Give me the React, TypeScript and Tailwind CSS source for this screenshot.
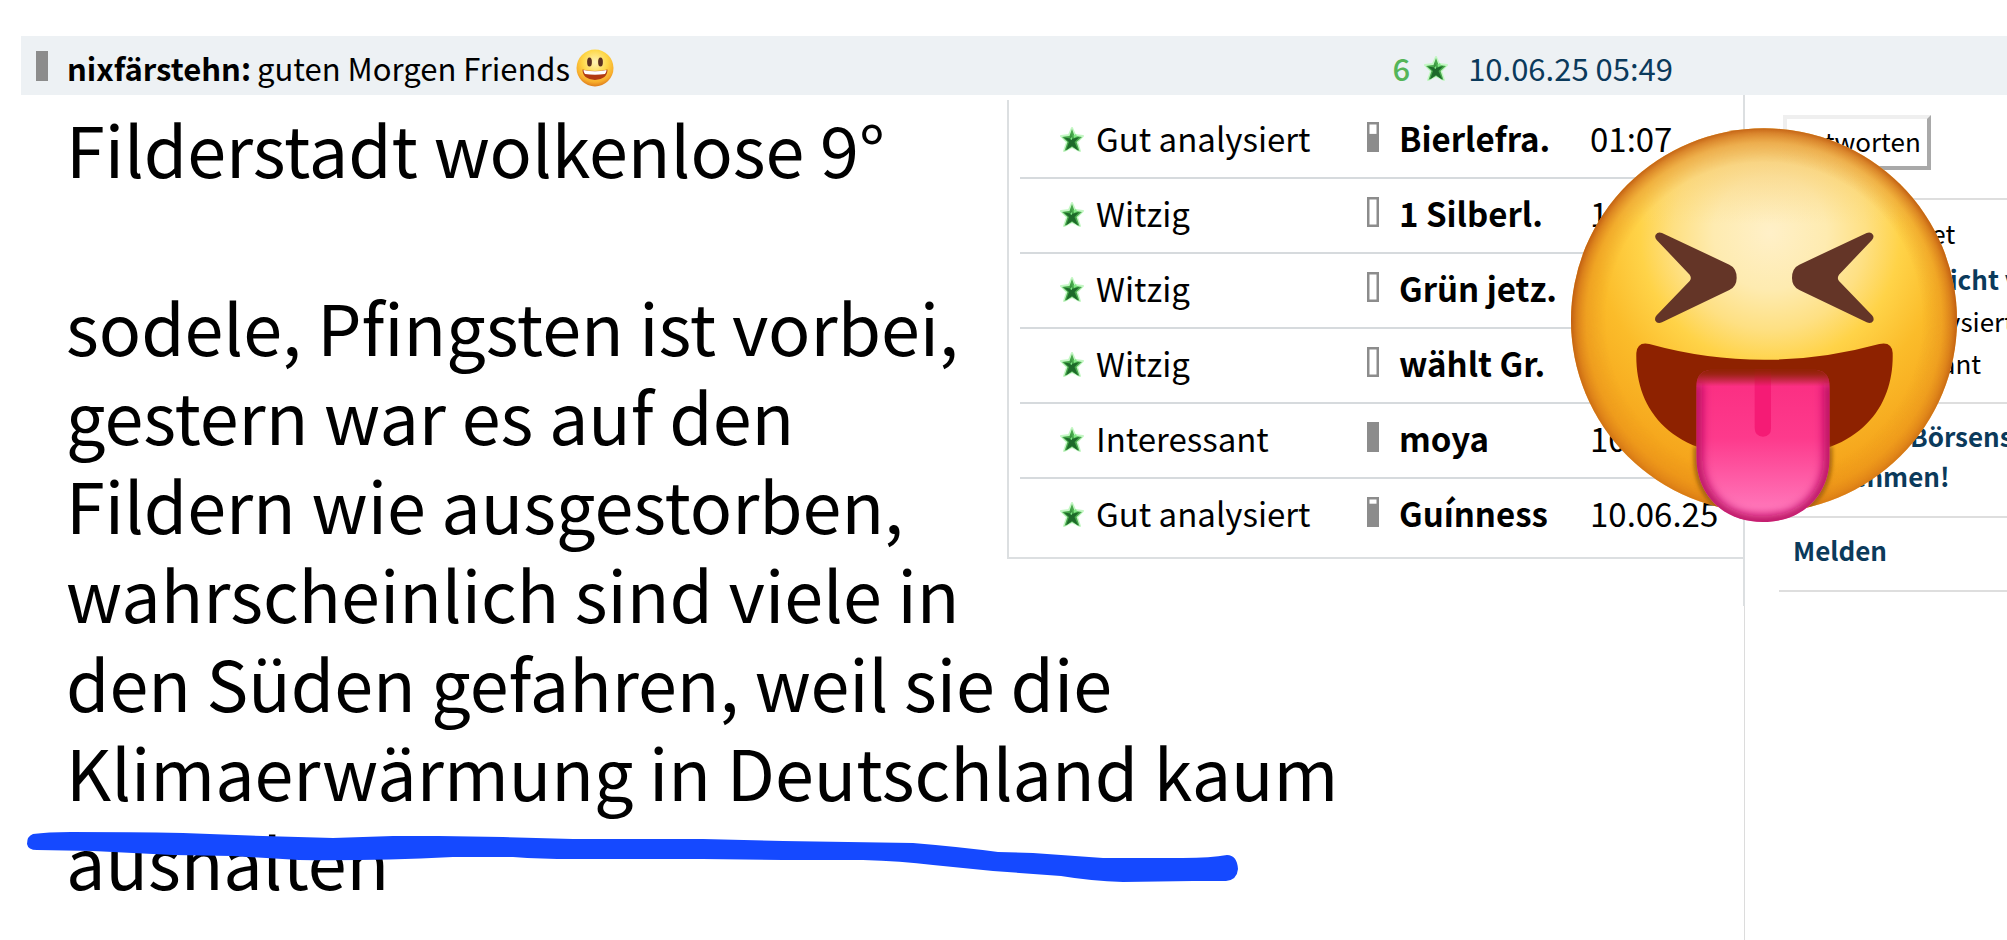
type Rating = {
  label: string;
  level: number;
  user: string;
  time: string;
};

const RATINGS: Rating[] = [
  { label: "Gut analysiert", level: 60, user: "Bierlefra.", time: "01:07" },
  { label: "Witzig",         level: 0,  user: "1 Silberl.", time: "10.06.25" },
  { label: "Witzig",         level: 0,  user: "Grün jetz.", time: "10.06.25" },
  { label: "Witzig",         level: 0,  user: "wählt Gr.",  time: "10.06.25" },
  { label: "Interessant",    level: 100, user: "moya",      time: "10.06.25" },
  { label: "Gut analysiert", level: 80, user: "Guínness",   time: "10.06.25" },
];

const POST_LINES = [
  "Filderstadt wolkenlose 9°",
  "",
  "sodele, Pfingsten ist vorbei,",
  "gestern war es auf den",
  "Fildern wie ausgestorben,",
  "wahrscheinlich sind viele in",
  "den Süden gefahren, weil sie die",
  "Klimaerwärmung in Deutschland kaum",
  "aushalten",
];

/* activity meter: grey column filled from the bottom */
function LevelBar({ level }: { level: number }) {
  const gap = 26 * (1 - level / 100);
  return (
    <svg viewBox="0 0 12 30" className="h-[30px] w-3 shrink-0" aria-hidden="true">
      <rect width="12" height="30" fill="#8c8c8c" />
      {gap > 0 && <rect x="2.500" y="2.500" width="7" height={gap - 1} fill="#fff" />}
    </svg>
  );
}

function Star() {
  return (
    <svg viewBox="0 0 24 26" className="h-[26px] w-6 shrink-0" aria-hidden="true">
      <path d="M12 2l3 7 8 1-6 6 3 9-8-4-8 4 3-9-6-6 8-1z" fill="#a6efa6" stroke="#c4f7c4" strokeWidth="2" strokeLinejoin="round" />
      <path d="M12 3l2.500 7 7.500 1-5.500 5 3 9-7.500-4-7.500 4 3-9-5.500-5 7.500-1z" fill="#48a94c" />
      <path d="M11 7l.5 6 8-2-5 5 4 9-6.500-5-6 4.500 3-8.500-5-4.500 6.500 1z" fill="#1d6a2a" />
      <path d="M13.500 9.500l2.500-1.500 1 2.500-3 1.500zM10 13l2-2v3z" fill="#7fe884" />
    </svg>
  );
}

/* small smiley behind the thread title */
function Smiley() {
  return (
    <svg viewBox="0 0 38 38" className="size-[38px] shrink-0 self-center" aria-hidden="true">
      <defs>
        <radialGradient id="smiley" cx="50%" cy="34%" r="66%">
          <stop offset="0" stopColor="#fff3b8" />
          <stop offset="0.5" stopColor="#fed848" />
          <stop offset="0.82" stopColor="#f8ae2c" />
          <stop offset="1" stopColor="#dd7b1c" />
        </radialGradient>
      </defs>
      <circle cx="19" cy="19" r="18.500" fill="url(#smiley)" />
      <ellipse cx="13.500" cy="13" rx="2.400" ry="4.500" fill="#5b3020" />
      <ellipse cx="24.500" cy="13" rx="2.400" ry="4.500" fill="#5b3020" />
      <path d="M6.500 20.500q12.500 3 25 0q0 9.500-12.500 10.500q-12.500-1-12.500-10.500z" fill="#b23a10" />
      <path d="M7.500 21q11.500 2.500 23 0q0 2.500-1.500 4q-10 1.500-20 0q-1.500-1.500-1.500-4z" fill="#fff" />
    </svg>
  );
}

function TongueFace() {
  return (
    <svg viewBox="93 85 1161 1182" className="h-[394px] w-[387px]" aria-hidden="true">
      <defs>
        <radialGradient id="face" gradientUnits="userSpaceOnUse" cx="690" cy="400" r="850">
          <stop offset="0" stopColor="#fff0c8" />
          <stop offset="0.2" stopColor="#feebb0" />
          <stop offset="0.34" stopColor="#fee083" />
          <stop offset="0.46" stopColor="#ffd348" />
          <stop offset="0.62" stopColor="#fbbc2a" />
          <stop offset="0.85" stopColor="#f5a51c" />
          <stop offset="1" stopColor="#ee9214" />
        </radialGradient>
        <linearGradient id="brow" x1="0" y1="0" x2="0" y2="1">
          <stop offset="0" stopColor="#f0bb62" stopOpacity="0.8" />
          <stop offset="0.25" stopColor="#f8d27a" stopOpacity="0" />
        </linearGradient>
        <radialGradient id="rim" gradientUnits="userSpaceOnUse" cx="672" cy="662" r="579">
          <stop offset="0.82" stopColor="#e08a1c" stopOpacity="0" />
          <stop offset="0.92" stopColor="#e0851c" stopOpacity="0.4" />
          <stop offset="0.97" stopColor="#d06f18" stopOpacity="0.75" />
          <stop offset="1" stopColor="#c05e12" />
        </radialGradient>
        <linearGradient id="rimFade" x1="0" y1="0" x2="0" y2="1">
          <stop offset="0.5" stopColor="#fff" />
          <stop offset="1" stopColor="#777" />
        </linearGradient>
        <mask id="rimMask">
          <rect x="93" y="85" width="1161" height="1160" fill="url(#rimFade)" />
        </mask>
        <linearGradient id="tongue" x1="0" y1="0" x2="0" y2="1">
          <stop offset="0" stopColor="#d02560" />
          <stop offset="0.1" stopColor="#fb2f83" />
          <stop offset="0.45" stopColor="#fd3a8c" />
          <stop offset="0.9" stopColor="#ff74b8" />
          <stop offset="1" stopColor="#f860a8" />
        </linearGradient>
        <linearGradient id="tongueShade" x1="0" y1="0" x2="0" y2="1">
          <stop offset="0" stopColor="#8e2200" />
          <stop offset="0.3" stopColor="#8e2200" stopOpacity="0.8" />
          <stop offset="1" stopColor="#8e2200" stopOpacity="0" />
        </linearGradient>
        <clipPath id="tongueClip">
          <path d="M469 860q0-45 42-50H827q42 5 42 50V1070C869 1195 780 1267 669 1267S469 1195 469 1070z" />
        </clipPath>
        <filter id="soft" x="-20%" y="-20%" width="140%" height="140%">
          <feGaussianBlur stdDeviation="14" />
        </filter>
        <filter id="softer" x="-20%" y="-20%" width="140%" height="140%">
          <feGaussianBlur stdDeviation="6" />
        </filter>
        <clipPath id="faceClip">
          <ellipse cx="672" cy="662" rx="579" ry="576" />
        </clipPath>
      </defs>
      <ellipse cx="672" cy="662" rx="579" ry="576" fill="url(#face)" />
      <ellipse cx="672" cy="662" rx="579" ry="576" fill="url(#brow)" />
      <ellipse cx="672" cy="662" rx="579" ry="576" fill="url(#rim)" mask="url(#rimMask)" />
      {/* eyes */}
      <path
        id="eye"
        d="M366 400L568 495Q590 505 590 535Q590 561 568 571L366 668Q352 674 346 663Q343 654 350 647L449 544Q456 535 449 525L350 421Q343 413 347 405Q354 395 366 400z"
        fill="#643527"
      />
      <use href="#eye" transform="translate(1346 0) scale(-1 1)" />
      {/* mouth */}
      <path
        d="M328 733Q672 828 1018 733Q1056 725 1058 760C1062 925 960 1072 672 1076C384 1072 285 925 289 760Q292 725 328 733z"
        fill="#8e2200"
      />
      <g clipPath="url(#faceClip)">
        <path d="M469 1040V1075C469 1195 560 1272 669 1272S869 1195 869 1075V1040" fill="none" stroke="#9a5a10" strokeWidth="14" filter="url(#softer)" />
      </g>
      <g clipPath="url(#tongueClip)">
        <rect x="465" y="808" width="410" height="460" fill="url(#tongue)" />
        <path d="M644 808H693V985Q693 1011 669 1011T644 985z" fill="#f51b75" />
        <path d="M469 850V1070C469 1195 560 1267 669 1267S869 1195 869 1070V850" fill="none" stroke="#b80d62" strokeWidth="36" filter="url(#soft)" />
        <rect x="465" y="808" width="410" height="52" fill="url(#tongueShade)" />
      </g>
    </svg>
  );
}

function MarkerStroke() {
  return (
    <svg viewBox="0 0 1220 62" className="h-[62px] w-[1220px]" aria-hidden="true">
      <path
        d="M6 22Q6 14 12 12Q26 10 50 10Q110 10 162 11L242 14L312 16L372 14L418 14L482 15L552 17L682 17L762 19L892 21Q940 25 977 30L1012 31L1082 36L1162 36Q1190 36 1206 33Q1216 33 1217 47Q1216 58 1205 59L1172 59L1102 60Q1070 59 1040 54L972 49L912 43Q880 39 842 38L762 38L682 37L552 37Q520 37 492 35L432 35Q350 39 278 38L212 34L152 33L72 29L16 28Q7 28 6 22z"
        fill="#1549ff"
      />
    </svg>
  );
}

export default function App() {
  return (
    <div className="flex min-h-screen flex-col overflow-hidden bg-white pt-9 pl-[21px] font-['Noto_Sans_CJK_SC','Open_Sans',sans-serif] text-black">
      {/* Post header */}
      <header className="flex h-[59px] items-baseline bg-[#edf1f4] pt-1 pr-[334px] pl-[15px] text-[31px] leading-[56px]">
        <LevelBar level={100} />
        <h1 className="ml-[19px] flex flex-1 items-baseline gap-1.5">
          <b>nixfärstehn:</b>
          <span>guten Morgen Friends</span>
          <Smiley />
        </h1>
        <span className="mr-3.5 font-medium text-[#55b559]">6</span>
        <Star />
        <a href="#post" className="ml-5 text-[#0b3a5b]">10.06.25 05:49</a>
      </header>

      <div className="relative flex flex-1">
        {/* Post body */}
        <main className="relative flex-1 pt-2 pl-[45px]">
          <div className="float-right -mt-[3px] w-[736px] border-b-2 border-l-2 border-[#dcdfe1] pt-1 pb-[5px] pl-[11px]">
            <table className="w-full text-[33px] leading-[69px]">
              <tbody>
                {RATINGS.map((r, i) => (
                  <tr key={i} className="border-b-2 border-[#d6dadd] last:border-b-0">
                    <td className="w-[347px] pb-1 pl-10">
                      <span className="flex items-baseline gap-3">
                        <Star />
                        {r.label}
                      </span>
                    </td>
                    <td className="w-[223px] pb-1">
                      <span className="flex items-baseline gap-5 font-bold">
                        <LevelBar level={r.level} />
                        {r.user}
                      </span>
                    </td>
                    <td className="pb-1">{r.time}</td>
                  </tr>
                ))}
              </tbody>
            </table>
          </div>
          <p className="text-[70px] leading-[89px] whitespace-nowrap">
            {POST_LINES.map((line, i) => (
              <span key={i}>
                {line}
                <br />
              </span>
            ))}
          </p>
          <div className="absolute top-[727px] left-0">
            <MarkerStroke />
          </div>
        </main>

        {/* Action column */}
        <div className="flex w-[264px] flex-col">
          <aside className="border-l-2 border-[#dcdfe1] pt-5 pb-3.5 pl-[34px] text-[26px] whitespace-nowrap">
            <button className="ml-1 h-[55px] border-4 border-t-[#efefef] border-r-[#a9a9a9] border-b-[#a9a9a9] border-l-[#efefef] bg-white px-1.5 pb-1">
              Antworten
            </button>
            <div className="mt-7 border-t-2 border-[#dedede] pt-3 pb-[18px] pl-3.5 leading-[42px]">
              <div className="pb-1 pl-[52px]">Bewertet</div>
              <a href="#rate" className="block pl-[68px] font-bold text-[#0b3a5b]">Noch nicht vergeben</a>
              <div className="pl-[52px]">Gut analysiert</div>
              <div className="pl-[52px]">Interessant</div>
            </div>
            <div className="border-t-2 border-[#dedede] pt-3 pb-5 pl-3.5 leading-10 font-bold text-[#0b3a5b]">
              <a href="#game">
                Jetzt am Börsenspiel
                <br />
                teilnehmen!
              </a>
            </div>
            <div className="border-y-2 border-[#dedede] pb-2 pl-3.5 leading-[64px] font-bold text-[#0b3a5b]">
              <a href="#report">Melden</a>
            </div>
          </aside>
          <div className="ml-px flex-1 border-l border-[#dcdcdc]" />
        </div>

        <div className="absolute top-[33px] right-[49px]">
          <TongueFace />
        </div>
      </div>
    </div>
  );
}
